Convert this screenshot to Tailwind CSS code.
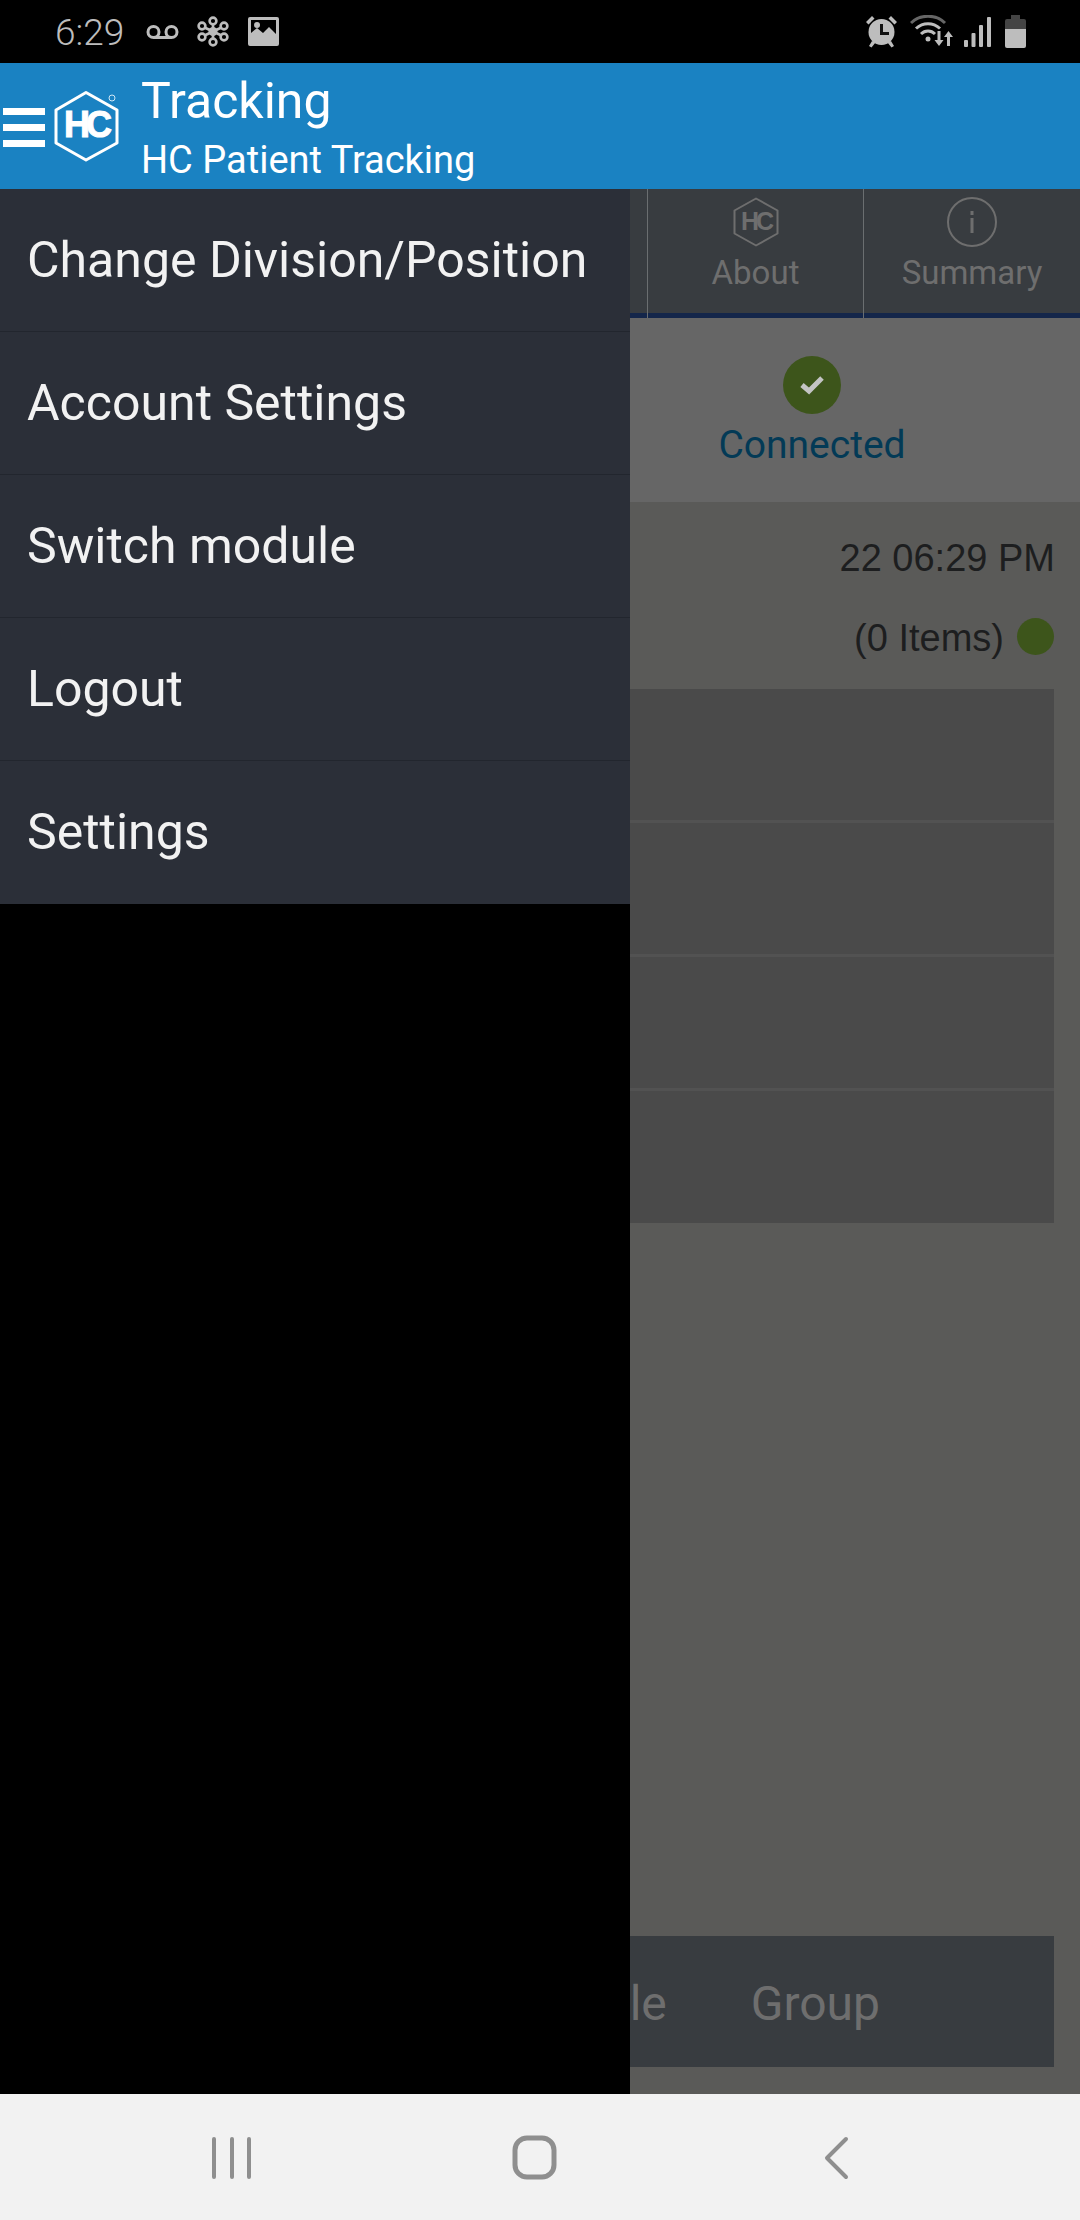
<!DOCTYPE html>
<html>
<head>
<script src="https://cdn.jsdelivr.net/npm/@tailwindcss/browser@4"></script>
</head>
<body class="m-0 bg-black">
<div class="relative w-[1080px] h-[2220px] flex flex-col overflow-hidden font-['Roboto',sans-serif]">
  <!-- status bar -->
  <div class="h-[63px] shrink-0 bg-black flex items-center justify-between text-[#bdbdbd]">
    <div class="flex items-center pl-[55px]">
      <span class="text-[37px] leading-[63px] font-light w-[91px] pt-[1px]">6:29</span>
      <svg class="w-[33px] h-[14px]" viewBox="0 0 33 14" fill="none" stroke="#bdbdbd" stroke-width="3"><circle cx="7.5" cy="7" r="5.5"/><circle cx="25.5" cy="7" r="5.5"/><path d="M7.5 12.5h18"/></svg>
      <svg class="w-[32px] h-[31px] ml-[18px]" viewBox="0 0 32 31" fill="none" stroke="#bdbdbd" stroke-width="2.6"><circle cx="16" cy="15.5" r="4.5" fill="#bdbdbd" stroke="none"/><circle cx="16" cy="5" r="3.4"/><circle cx="16" cy="26" r="3.4"/><circle cx="5" cy="10" r="3.4"/><circle cx="27" cy="10" r="3.4"/><circle cx="5" cy="21" r="3.4"/><circle cx="27" cy="21" r="3.4"/><path d="M16 8v15M7.5 11.5l17 8M24.5 11.5l-17 8"/></svg>
      <svg class="w-[31px] h-[29px] ml-[19px]" viewBox="0 0 31 29"><path fill="#bdbdbd" fill-rule="evenodd" d="M2 0h27a2 2 0 0 1 2 2v25a2 2 0 0 1-2 2H2a2 2 0 0 1-2-2V2a2 2 0 0 1 2-2zM3 3v13l6-5 6 5 6-6 7 7V3z"/><circle cx="9" cy="8" r="3" fill="#bdbdbd"/></svg>
    </div>
    <div class="flex items-center pr-[54px]">
      <svg class="w-[33px] h-[33px]" viewBox="0 0 33 33"><path d="M1 7l6-6 2.500 2.500-6 6zM32 7l-6-6-2.500 2.500 6 6z" fill="#bdbdbd"/><circle cx="16.500" cy="17" r="13" fill="#bdbdbd"/><path d="M15 9h3v8h6v3h-9z" fill="#111"/><path d="M7 26l-3 5 2.500 1.500 4-5zM26 26l3 5-2.500 1.500-4-5z" fill="#bdbdbd"/></svg>
      <svg class="w-[44px] h-[33px] ml-[12px]" viewBox="0 0 44 33" fill="none"><path d="M1 8C10 -1 26 -1 35 8" stroke="#666" stroke-width="3"/><path d="M6 13.500C13 7 23 7 30 13.500" stroke="#bdbdbd" stroke-width="3"/><path d="M11 19C15 15 21 15 25 19" stroke="#bdbdbd" stroke-width="3"/><circle cx="18" cy="24" r="2.500" fill="#bdbdbd"/><path d="M26.500 18h3v9h3l-4.500 6-4.500-6h3zM39 33h-3v-9h-3l4.500-6 4.500 6h-3z" fill="#bdbdbd" transform="translate(1 -2)"/></svg>
      <svg class="w-[27px] h-[30px] ml-[10px]" viewBox="0 0 27 30" fill="#bdbdbd"><rect x="0" y="23" width="4" height="7" rx="1"/><rect x="7.500" y="16" width="4" height="14" rx="1"/><rect x="15" y="8" width="4" height="22" rx="1"/><rect x="23" y="0" width="4" height="30" rx="1"/></svg>
      <svg class="w-[21px] h-[33px] ml-[14px]" viewBox="0 0 21 33"><path d="M6 0h9v4h4a2 2 0 0 1 2 2v8H0V6a2 2 0 0 1 2-2h4z" fill="#444"/><path d="M0 14h21v17a2 2 0 0 1-2 2H2a2 2 0 0 1-2-2z" fill="#bdbdbd"/></svg>
    </div>
  </div>
  <!-- app bar -->
  <div class="h-[126px] shrink-0 bg-[#1a82c2] flex text-white">
    <div class="flex flex-col gap-[9px] pl-[3px] pt-[45px] w-[54px]">
      <div class="w-[42px] h-[7px] bg-white"></div>
      <div class="w-[42px] h-[7px] bg-white"></div>
      <div class="w-[42px] h-[7px] bg-white"></div>
    </div>
    <svg class="w-[66px] h-[72px] mt-[27px]" viewBox="0 0 66 72" fill="none">
      <path d="M32 2.500 63 20v33L32 70 2 53V20z" stroke="#fff" stroke-width="3" stroke-linejoin="round"/>
      <text x="32" y="47" text-anchor="middle" fill="#fff" font-family="Liberation Sans" font-weight="700" font-size="36" letter-spacing="-4" stroke="#fff" stroke-width="1">HC</text>
      <circle cx="58" cy="8" r="3" stroke="#cfe6f5" stroke-width="1"/>
    </svg>
    <div class="ml-[21px] flex flex-col">
      <div class="text-[50px] leading-[56px] mt-[10px]">Tracking</div>
      <div class="text-[38px] leading-[44px] mt-[9px]">HC Patient Tracking</div>
    </div>
  </div>
  <!-- page behind the drawer -->
  <div class="flex-1 flex flex-col bg-[#5a5a58]">
    <div class="h-[129px] shrink-0 bg-[#383c40] border-b-[5px] border-[#14264a] flex justify-end text-[#6e6e6e]">
      <div class="w-[216px] h-[129px] border-l border-[#6a6e70] flex flex-col items-center">
        <svg class="w-[46px] h-[50px] mt-[8px]" viewBox="0 0 46 50" fill="none"><path d="M23 1.500 44.500 13.500v23L23 48.500 1.500 36.500v-23z" stroke="#6e6e6e" stroke-width="2" stroke-linejoin="round"/><text x="23" y="33" text-anchor="middle" fill="#6e6e6e" font-family="Liberation Sans" font-weight="700" font-size="25" letter-spacing="-3">HC</text></svg>
        <span class="text-[33px] leading-[40px] mt-[6px]">About</span>
      </div>
      <div class="w-[217px] h-[129px] border-l border-[#6a6e70] flex flex-col items-center">
        <svg class="w-[50px] h-[50px] mt-[8px]" viewBox="0 0 50 50" fill="none" stroke="#6e6e6e" stroke-width="2"><circle cx="25" cy="25" r="24"/><path d="M25 21v15M25 14v4" stroke-width="3"/></svg>
        <span class="text-[33px] leading-[40px] mt-[6px]">Summary</span>
      </div>
    </div>
    <div class="h-[184px] shrink-0 bg-[#666666] flex flex-col items-center pl-[544px]">
      <div class="w-[58px] h-[58px] mt-[38px] rounded-full bg-[#3d551b] flex items-center justify-center">
        <svg class="w-[24px] h-[20px]" viewBox="0 0 24 20" fill="none" stroke="#c4c4c4" stroke-width="5"><path d="M2 10l7 6L22 3"/></svg>
      </div>
      <span class="text-[39px] leading-[46px] mt-[8px] text-[#033a56]">Connected</span>
    </div>
    <div class="flex flex-col items-end pr-[25px] text-[#1d1e1f] font-['Liberation_Sans',sans-serif]">
      <div class="text-[38px] leading-[44px] mt-[34px] pr-[218px] w-[800px] text-right"><span class="-mr-[218px]">22 06:29 PM</span></div>
      <div class="flex items-center mt-[35px] pr-[1px] w-full justify-end text-[38px] leading-[46px]">
        <span>(0 Items)</span>
        <span class="w-[37px] h-[37px] rounded-full bg-[#3d551b] ml-[13px] -mt-[4px]"></span>
      </div>
    </div>
    <div class="ml-[600px] mr-[26px] mt-[28px] flex flex-col gap-[3px] bg-[#525252]">
      <div class="h-[131px] bg-[#4a4a4a]"></div>
      <div class="h-[131px] bg-[#4a4a4a]"></div>
      <div class="h-[131px] bg-[#4a4a4a]"></div>
      <div class="h-[132px] bg-[#4a4a4a]"></div>
    </div>
    <div class="mt-auto mb-[27px] ml-[500px] mr-[26px] h-[131px] bg-[#383c40] flex items-center justify-between text-[#6e6e6e] text-[48px]">
      <span class="ml-[36px] mt-[4px]">Single</span>
      <span class="mr-[174px] mt-[4px]">Group</span>
    </div>
  </div>
  <!-- nav bar -->
  <div class="h-[126px] shrink-0 bg-[#f2f2f2] relative">
    <svg class="absolute left-0 top-0 w-[1080px] h-[126px]" viewBox="0 0 1080 126" fill="none" stroke="#8f8f8f" stroke-linecap="round">
      <path d="M214 45v38M232 45v38M249 45v38" stroke-width="4"/>
      <rect x="515" y="44" width="39" height="39" rx="12" stroke-width="5"/>
      <path d="M846 45 827 64l19 19" stroke-width="4" stroke-linejoin="round"/>
    </svg>
  </div>
  <!-- drawer -->
  <div class="absolute left-0 top-[189px] w-[630px] h-[1905px] bg-black text-[#f2f2f2] text-[50px]">
    <div class="h-[143px] pl-[27px] flex items-center bg-[#2b2f38] border-b border-[#22262e]">Change Division/Position</div>
    <div class="h-[143px] pl-[27px] flex items-center bg-[#2b2f38] border-b border-[#22262e]">Account Settings</div>
    <div class="h-[143px] pl-[27px] flex items-center bg-[#2b2f38] border-b border-[#22262e]">Switch module</div>
    <div class="h-[143px] pl-[27px] flex items-center bg-[#2b2f38] border-b border-[#22262e]">Logout</div>
    <div class="h-[143px] pl-[27px] flex items-center bg-[#2b2f38]">Settings</div>
  </div>
</div>
</body>
</html>
